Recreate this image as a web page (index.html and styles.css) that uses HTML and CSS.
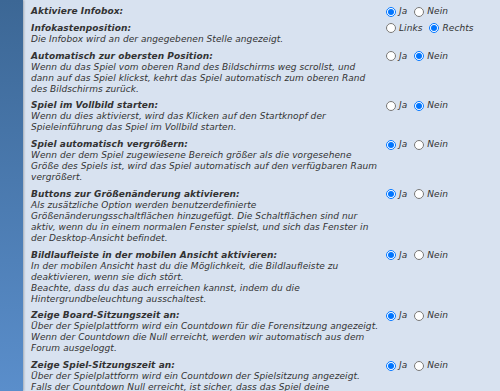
FILE: index.html
```html
<!DOCTYPE html>
<html lang="de">

<head>
    <meta charset="UTF-8">
    <meta name="viewport" content="width=device-width, initial-scale=1.0">
    <title>Einstellungen</title>
    <link rel="stylesheet" href="styles.css">
</head>

<body>

    <div class="side"></div>

    <div class="panel">

        <div class="option">
            <div class="text">
                <div class="title">Aktiviere Infobox:</div>
            </div>
            <div class="choice">
                <label><input type="radio" name="infobox" checked> Ja</label>
                <label><input type="radio" name="infobox"> Nein</label>
            </div>
        </div>

        <div class="option">
            <div class="text">
                <div class="title">Infokastenposition:</div>
                <div class="desc">Die Infobox wird an der angegebenen Stelle angezeigt.</div>
            </div>
            <div class="choice">
                <label><input type="radio" name="position"> Links</label>
                <label><input type="radio" name="position" checked> Rechts</label>
            </div>
        </div>

        <div class="option">
            <div class="text">
                <div class="title">Automatisch zur obersten Position:</div>
                <div class="desc">Wenn du das Spiel vom oberen Rand des Bildschirms weg scrollst, und<br>dann auf das Spiel klickst, kehrt das Spiel automatisch zum oberen Rand des Bildschirms zurück.</div>
            </div>
            <div class="choice">
                <label><input type="radio" name="top"> Ja</label>
                <label><input type="radio" name="top" checked> Nein</label>
            </div>
        </div>

        <div class="option">
            <div class="text">
                <div class="title">Spiel im Vollbild starten:</div>
                <div class="desc">Wenn du dies aktivierst, wird das Klicken auf den Startknopf der Spieleinführung das Spiel im Vollbild starten.</div>
            </div>
            <div class="choice">
                <label><input type="radio" name="fullscreen"> Ja</label>
                <label><input type="radio" name="fullscreen" checked> Nein</label>
            </div>
        </div>

        <div class="option">
            <div class="text">
                <div class="title">Spiel automatisch vergrößern:</div>
                <div class="desc">Wenn der dem Spiel zugewiesene Bereich größer als die vorgesehene Größe des Spiels ist, wird das Spiel automatisch auf den verfügbaren Raum vergrößert.</div>
            </div>
            <div class="choice">
                <label><input type="radio" name="scale" checked> Ja</label>
                <label><input type="radio" name="scale"> Nein</label>
            </div>
        </div>

        <div class="option">
            <div class="text">
                <div class="title">Buttons zur Größenänderung aktivieren:</div>
                <div class="desc">Als zusätzliche Option werden benutzerdefinierte Größenänderungsschaltflächen hinzugefügt. Die Schaltflächen sind nur aktiv, wenn du in einem normalen Fenster spielst, und sich das Fenster in der Desktop-Ansicht befindet.</div>
            </div>
            <div class="choice">
                <label><input type="radio" name="resize" checked> Ja</label>
                <label><input type="radio" name="resize"> Nein</label>
            </div>
        </div>

        <div class="option">
            <div class="text">
                <div class="title">Bildlaufleiste in der mobilen Ansicht aktivieren:</div>
                <div class="desc">In der mobilen Ansicht hast du die Möglichkeit, die Bildlaufleiste zu deaktivieren, wenn sie dich stört.<br>Beachte, dass du das auch erreichen kannst, indem du die Hintergrundbeleuchtung ausschaltest.</div>
            </div>
            <div class="choice">
                <label><input type="radio" name="scrollbar" checked> Ja</label>
                <label><input type="radio" name="scrollbar"> Nein</label>
            </div>
        </div>

        <div class="option">
            <div class="text">
                <div class="title">Zeige Board-Sitzungszeit an:</div>
                <div class="desc">Über der Spielplattform wird ein Countdown für die Forensitzung angezeigt. Wenn der Countdown die Null erreicht, werden wir automatisch aus dem Forum ausgeloggt.</div>
            </div>
            <div class="choice">
                <label><input type="radio" name="board" checked> Ja</label>
                <label><input type="radio" name="board"> Nein</label>
            </div>
        </div>

        <div class="option">
            <div class="text">
                <div class="title">Zeige Spiel-Sitzungszeit an:</div>
                <div class="desc">Über der Spielplattform wird ein Countdown der Spielsitzung angezeigt. Falls der Countdown Null erreicht, ist sicher, dass das Spiel deine Spielsitzung beendet hat.</div>
            </div>
            <div class="choice">
                <label><input type="radio" name="game" checked> Ja</label>
                <label><input type="radio" name="game"> Nein</label>
            </div>
        </div>

    </div>

</body>
</html>
```

FILE: styles.css
```css
body {
    font-family: "DejaVu Sans", Verdana, sans-serif;
    font-size: 9px;
    line-height: 11px;
    letter-spacing: 0.07px;
    color: #333;
    margin: 0;
    height: 391px;
    overflow: hidden;
    display: flex;
    background-color: #d8e2f0;
}

.side {
    width: 23px;
    flex-shrink: 0;
    background: linear-gradient(to bottom, #3c6795, #5a8ecb);
    box-shadow: 1px 0 2px rgba(0, 0, 0, 0.25);
}

.panel {
    flex: 1;
    padding: 6px 0 0 8px;
}

.option {
    display: flex;
    margin-bottom: 5.75px;
}

.text {
    width: 350px;
    flex-shrink: 0;
    font-style: italic;
}

.title {
    font-weight: bold;
}

.choice {
    margin-left: 5px;
    display: flex;
    gap: 7px;
    font-style: italic;
    white-space: nowrap;
}

.choice label {
    display: flex;
    align-items: center;
    height: 11px;
}

.choice input {
    width: 10px;
    height: 10px;
    margin: 0 3px 0 0;
}
```
